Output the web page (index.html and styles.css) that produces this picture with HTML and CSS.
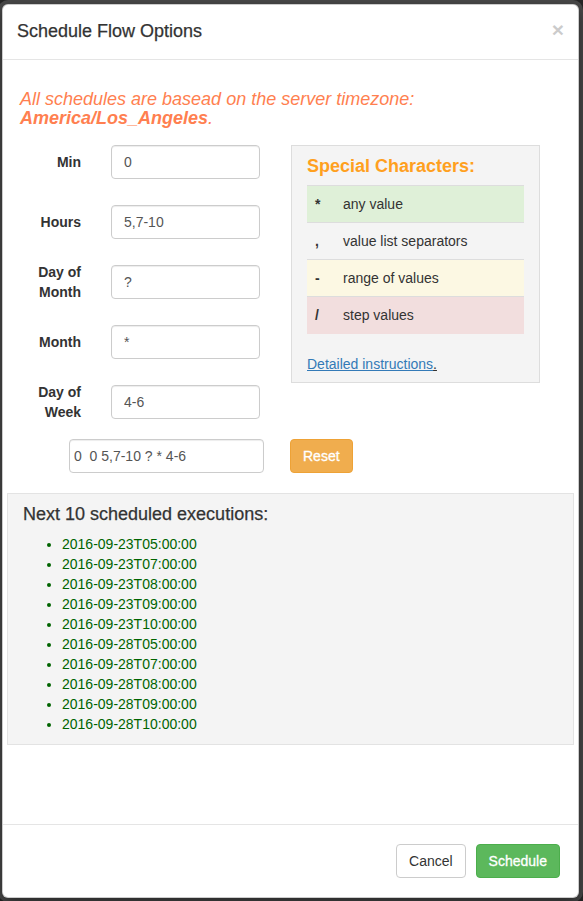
FILE: index.html
```html
<!DOCTYPE html>
<html>
<head>
<meta charset="utf-8">
<link rel="stylesheet" href="styles.css">
</head>
<body>
<div class="modal">
  <div class="modal-header">
    <h4 class="modal-title">Schedule Flow Options</h4>
    <span class="close">&times;</span>
  </div>
  <div class="modal-body">
    <p class="tz-note">All schedules are basead on the server timezone:<br><b>America/Los_Angeles</b>.</p>
    <div class="cron-area">
      <div class="fields">
        <label class="field-label">Min</label>
        <input class="field-input" type="text" value="0">
        <label class="field-label">Hours</label>
        <input class="field-input" type="text" value="5,7-10">
        <label class="field-label">Day of<br>Month</label>
        <input class="field-input" type="text" value="?">
        <label class="field-label">Month</label>
        <input class="field-input" type="text" value="*">
        <label class="field-label">Day of<br>Week</label>
        <input class="field-input" type="text" value="4-6">
      </div>
      <div class="special-panel">
        <h4 class="special-title">Special Characters:</h4>
        <table class="special-table">
          <colgroup><col class="col-sym"><col></colgroup>
          <tr class="row-success"><td class="sym">*</td><td>any value</td></tr>
          <tr><td class="sym">,</td><td>value list separators</td></tr>
          <tr class="row-warning"><td class="sym">-</td><td>range of values</td></tr>
          <tr class="row-danger"><td class="sym">/</td><td>step values</td></tr>
        </table>
        <p class="instructions"><a href="#">Detailed instructions</a>.</p>
      </div>
    </div>
    <div class="combined-row">
      <input class="combined-input" type="text" value="0  0 5,7-10 ? * 4-6">
      <button class="btn btn-warning">Reset</button>
    </div>
    <div class="well">
      <h4 class="well-title">Next 10 scheduled executions:</h4>
      <ul class="exec-list">
        <li>2016-09-23T05:00:00</li>
        <li>2016-09-23T07:00:00</li>
        <li>2016-09-23T08:00:00</li>
        <li>2016-09-23T09:00:00</li>
        <li>2016-09-23T10:00:00</li>
        <li>2016-09-28T05:00:00</li>
        <li>2016-09-28T07:00:00</li>
        <li>2016-09-28T08:00:00</li>
        <li>2016-09-28T09:00:00</li>
        <li>2016-09-28T10:00:00</li>
      </ul>
    </div>
  </div>
  <div class="modal-footer">
    <button class="btn btn-default">Cancel</button>
    <button class="btn btn-success">Schedule</button>
  </div>
</div>
</body>
</html>
```
FILE: styles.css
```css
* { box-sizing: border-box; }
html, body { margin: 0; padding: 0; }
body {
  background: #262626;
  font-family: "Liberation Sans", Arial, sans-serif;
  font-size: 14px;
  color: #333;
  padding: 4px 0 0 2px;
  height: 901px;
  overflow: hidden;
}
.modal {
  width: 577px;
  height: 894px;
  background: #fff;
  border: 1px solid rgba(0,0,0,0.2);
  border-radius: 6px;
  box-shadow: 0 5px 15px rgba(0,0,0,0.5), 0 0 0 4px #4a4a4a;
  display: flex;
  flex-direction: column;
  overflow: hidden;
}
.modal-header {
  height: 55px;
  flex: none;
  border-bottom: 1px solid #e5e5e5;
  display: flex;
  align-items: center;
  justify-content: space-between;
  padding: 0 14px 2px 14px;
}
.modal-title {
  margin: 0;
  font-size: 18px;
  font-weight: 500;
  line-height: 20px;
  color: #333;
  -webkit-text-stroke: 0.25px #333;
}
.close {
  font-size: 21px;
  font-weight: bold;
  color: #000;
  opacity: 0.2;
  line-height: 1;
  margin-top: -4px;
}
.modal-body {
  flex: 1;
  padding: 0;
}
.tz-note {
  margin: 30px 0 0 17px;
  color: #ff7f50;
  font-style: italic;
  font-size: 18px;
  line-height: 19px;
}
.cron-area {
  display: flex;
  align-items: flex-start;
  margin-top: 17px;
}
.fields {
  display: grid;
  grid-template-columns: 78px 149px;
  grid-auto-rows: 34px;
  column-gap: 30px;
  row-gap: 26px;
}
.field-label {
  font-weight: bold;
  text-align: right;
  align-self: center;
  line-height: 20px;
}
.field-input, .combined-input {
  height: 34px;
  border: 1px solid #ccc;
  border-radius: 4px;
  padding: 6px 12px;
  font-family: "Liberation Sans", Arial, sans-serif;
  font-size: 14px;
  color: #555;
  box-shadow: inset 0 1px 1px rgba(0,0,0,0.075);
  width: 100%;
}
.special-panel {
  margin-left: 31px;
  width: 249px;
  height: 238px;
  background: #f4f4f4;
  border: 1px solid #ddd;
  padding: 10px 15px 0 15px;
}
.special-title {
  margin: 0;
  color: #ffa01e;
  font-size: 18px;
  font-weight: bold;
  line-height: 20px;
}
.special-table {
  margin-top: 9px;
  width: 217px;
  border-collapse: collapse;
  table-layout: fixed;
}
.col-sym { width: 28px; }
.special-table td {
  height: 37px;
  border-top: 1px solid #ddd;
  padding: 0 8px;
  vertical-align: middle;
}
.special-table td.sym {
  font-weight: bold;
}
.row-success td { background: #dff0d8; }
.row-warning td { background: #fcf8e3; }
.row-danger td { background: #f2dede; }
.instructions {
  margin: 20px 0 0 0;
  line-height: 20px;
  text-decoration: underline;
  color: #333;
}
.instructions a {
  color: #337ab7;
  text-decoration: underline;
}
.combined-row {
  display: flex;
  align-items: center;
  margin-top: 20px;
  padding-left: 66px;
}
.combined-input {
  width: 195px;
  padding: 6px 4px;
}
.btn {
  height: 34px;
  padding: 6px 12px;
  font-family: "Liberation Sans", Arial, sans-serif;
  font-size: 14px;
  line-height: 20px;
  border-radius: 4px;
  border: 1px solid transparent;
  cursor: pointer;
}
.btn-warning {
  margin-left: 26px;
  background: #f0ad4e;
  border-color: #eea236;
  color: #fff;
  -webkit-text-stroke: 0.3px #fff;
}
.btn-default {
  background: #fff;
  border-color: #ccc;
  color: #333;
}
.btn-success {
  background: #5cb85c;
  border-color: #4cae4c;
  color: #fff;
  -webkit-text-stroke: 0.3px #fff;
}
.well {
  margin: 20px 4px 0 4px;
  background: #f4f4f4;
  border: 1px solid #e3e3e3;
  padding: 10px 15px 10px 15px;
}
.well-title {
  margin: 0;
  font-size: 18px;
  font-weight: 500;
  line-height: 20px;
  color: #333;
  -webkit-text-stroke: 0.25px #333;
}
.exec-list {
  margin: 10px 0 0 0;
  padding-left: 39px;
  color: #006400;
  line-height: 20px;
}
.modal-footer {
  flex: none;
  border-top: 1px solid #e5e5e5;
  padding: 19px 18px 19px 17px;
  display: flex;
  justify-content: flex-end;
  gap: 10px;
}
```
